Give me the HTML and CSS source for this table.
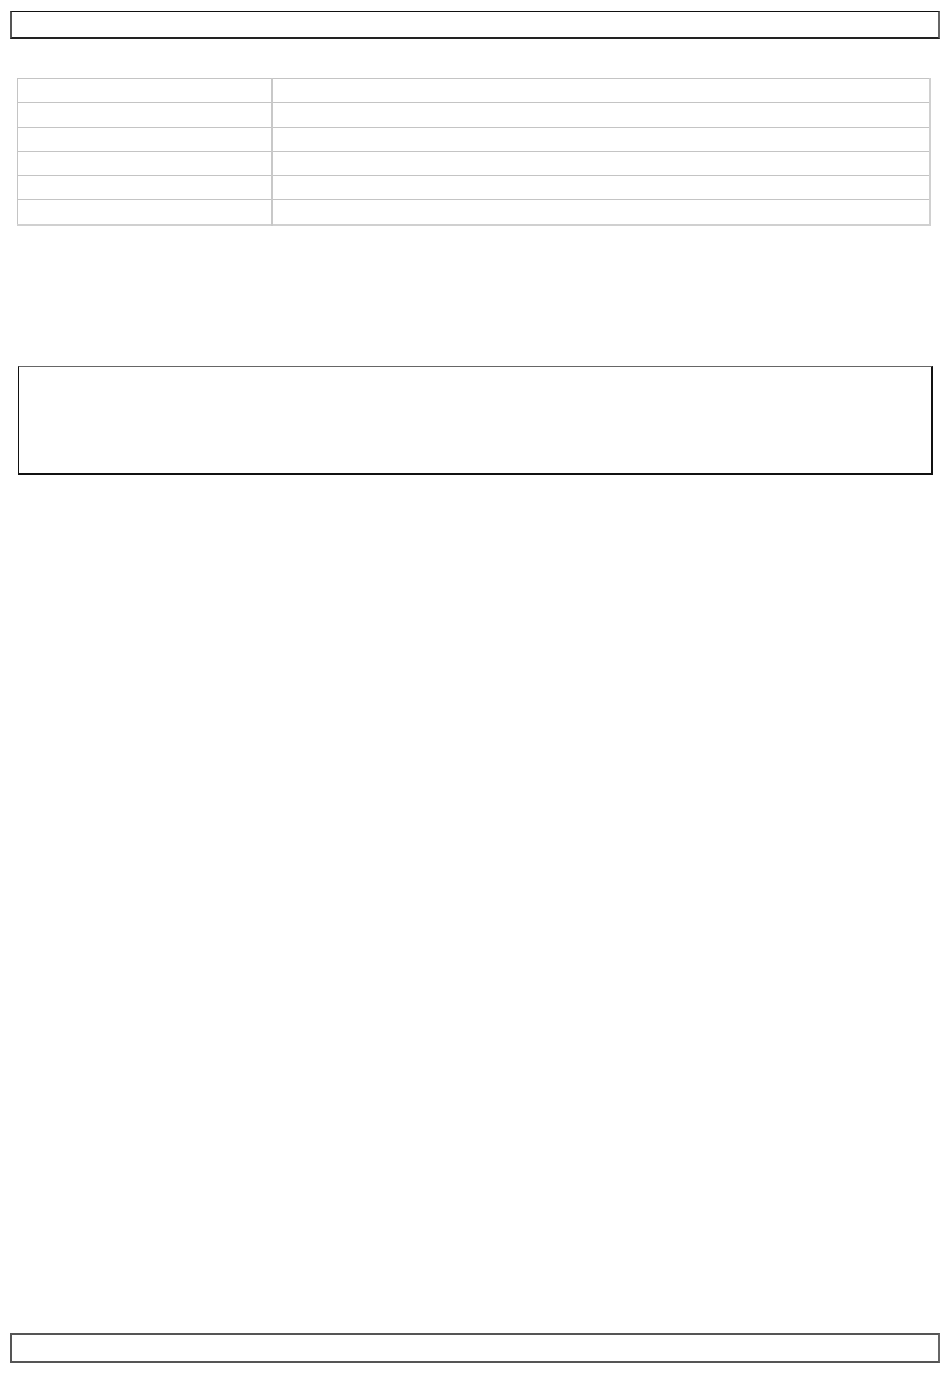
FILE: index.html
```html
<!DOCTYPE html>
<html lang="en">
<head>
<meta charset="utf-8">
<title>Page</title>
<link rel="stylesheet" href="styles.css">
</head>
<body>
<div class="page">
  <div class="bar bar-top"></div>
  <table class="info">
    <tr><td class="key"></td><td class="val"></td></tr>
    <tr><td class="key"></td><td class="val"></td></tr>
    <tr><td class="key"></td><td class="val"></td></tr>
    <tr><td class="key"></td><td class="val"></td></tr>
    <tr><td class="key"></td><td class="val"></td></tr>
    <tr><td class="key"></td><td class="val"></td></tr>
  </table>
  <div class="panel"></div>
  <div class="bar bar-bottom"></div>
</div>
</body>
</html>
```
FILE: styles.css
```css
html, body {
  margin: 0;
  padding: 0;
  background: #fff;
  font-family: "Liberation Sans", Arial, sans-serif;
}
.page {
  display: flex;
  flex-direction: column;
  min-height: 1374px;
  box-sizing: border-box;
  padding: 11px 0 11px 0;
}
.bar {
  box-sizing: border-box;
  margin: 0 10px;
  border-top: 1px solid #111;
  border-bottom: 2px solid #222;
  border-left: 2px solid #555;
  border-right: 2px solid #666;
}
.bar-top {
  height: 28px;
}
.bar-bottom {
  height: 30px;
  margin-top: auto;
  border-top: 2px solid #555;
  border-bottom: 2px solid #555;
}
.info {
  margin: 39px 0 0 17px;
  width: 914px;
  border-collapse: collapse;
  border: 1px solid #d0d0d0;
  border-bottom-width: 2px;
  border-right-width: 2px;
}
.info td {
  height: 23.3px;
  padding: 0;
  border: 1px solid #c4c4c4;
}
.info td.key {
  width: 253px;
  border-right: 2px solid #c8c8c8;
}
.panel {
  box-sizing: border-box;
  margin: 140px 0 0 18px;
  width: 915px;
  height: 109px;
  border: 1px solid #111;
  border-top-color: #666;
  border-right-width: 2px;
  border-bottom-width: 2px;
}
```
